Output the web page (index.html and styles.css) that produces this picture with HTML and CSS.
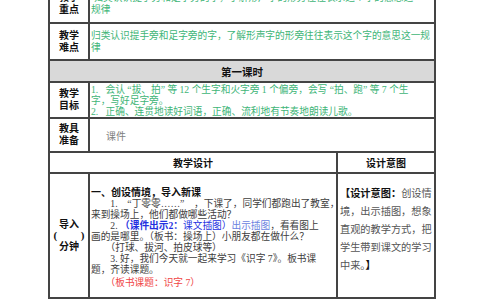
FILE: index.html
```html
<!DOCTYPE html>
<html lang="zh">
<head>
<meta charset="utf-8">
<title>识字7 教学设计</title>
<link rel="stylesheet" href="styles.css">
</head>
<body>
<div class="sheet">
  <div class="cell label"><span>教学</span><span>重点</span></div>
  <div class="cell text green wide">
    <div class="ln">&nbsp;归类认识提手旁和足字旁的字，了解形声字的形旁往往表示这个字的意思这</div>
    <div class="ln">规律</div>
  </div>

  <div class="cell label"><span>教学</span><span>难点</span></div>
  <div class="cell text green wide">
    <div class="ln">归类认识提手旁和足字旁的字，了解形声字的形旁往往表示这个字的意思这一规</div>
    <div class="ln">律</div>
  </div>

  <div class="cell section">第一课时</div>

  <div class="cell label"><span>教学</span><span>目标</span></div>
  <div class="cell text green wide tight">
    <div class="ln">1.&nbsp;&nbsp; 会认 “拔、拍” 等 12 个生字和火字旁 1 个偏旁，会写 “拍、跑” 等 7 个生</div>
    <div class="ln">字，写好足字旁。</div>
    <div class="ln">2.&nbsp;&nbsp; 正确、连贯地读好词语，正确、流利地有节奏地朗读儿歌。</div>
  </div>

  <div class="cell label"><span>教具</span><span>准备</span></div>
  <div class="cell wide tools">课件</div>

  <div class="cell head head-main">教学设计</div>
  <div class="cell head">设计意图</div>

  <div class="cell label step"><span>导入</span><span class="paren"><span>(</span><span>)</span></span><span>分钟</span></div>
  <div class="cell body">
    <div class="ln strong">一、创设情境，导入新课</div>
    <div class="ln">　　1.&nbsp;&nbsp;&nbsp; “丁零零……”&nbsp;&nbsp;&nbsp; ，下课了，同学们都跑出了教室，</div>
    <div class="ln">来到操场上，他们都做哪些活动？</div>
    <div class="ln">　　2. <b class="blue">（课件出示2：</b><span class="blue">课文插图）</span><span class="lightblue">出示插图</span>，看看图上</div>
    <div class="ln">画的是哪里。（板书：操场上）小朋友都在做什么？</div>
    <div class="ln">　　（打球、拔河、拍皮球等）</div>
    <div class="ln">　　3. 好，我们今天就一起来学习《识字 7》。板书课</div>
    <div class="ln">题，齐读课题。</div>
    <div class="ln red">　　（板书课题：识字 7）</div>
  </div>
  <div class="cell intent">
    <div class="ln"><b>【设计意图：</b>创设情</div>
    <div class="ln">境，出示插图，想象</div>
    <div class="ln">直观的教学方式，把</div>
    <div class="ln">学生带到课文的学习</div>
    <div class="ln">中来。<b>】</b></div>
  </div>
</div>
</body>
</html>
```

FILE: styles.css
```css
html, body {
  margin: 0;
  padding: 0;
  background: #ffffff;
}

body {
  font-family: "Liberation Serif", "Noto Sans CJK SC", serif;
  color: #3d3d3d;
  overflow: hidden;
}

.sheet {
  display: grid;
  grid-template-columns: 40px 248px 98px;
  grid-template-rows: 38px 37px 22px 36px 34px 21px 125px;
  width: max-content;
  margin: -16px 0 0 48px;
  border-left: 2px solid #444;
  border-top: 2px solid #444;
}

.cell {
  box-sizing: border-box;
  border-right: 2px solid #444;
  border-bottom: 2px solid #444;
  overflow: hidden;
  min-width: 0;
}

.ln {
  white-space: nowrap;
}

.label {
  display: flex;
  flex-direction: column;
  align-items: center;
  justify-content: center;
  font-size: 10px;
  line-height: 12px;
  font-weight: 700;
  color: #111;
}

.step {
  line-height: 11px;
}

.paren {
  display: flex;
  justify-content: space-between;
  width: 31px;
  font-size: 11px;
}

.wide {
  grid-column: 2 / 4;
}

.text {
  display: flex;
  flex-direction: column;
  justify-content: center;
  padding-left: 1px;
  font-size: 9.7px;
  line-height: 12px;
}

.tight {
  line-height: 11px;
}

.green {
  color: #3eb577;
}

.section {
  grid-column: 1 / 4;
  display: flex;
  align-items: center;
  justify-content: center;
  background: #d9d9d9;
  font-size: 10.5px;
  font-weight: 700;
  color: #111;
}

.tools {
  display: flex;
  align-items: center;
  padding-left: 16px;
  font-size: 10px;
  color: #808080;
}

.head {
  display: flex;
  align-items: center;
  justify-content: center;
  font-size: 10px;
  font-weight: 700;
  color: #111;
}

.head-main {
  grid-column: 1 / 3;
}

.body {
  padding: 13px 0 0 1px;
  font-size: 9.7px;
  line-height: 11px;
}

.strong {
  font-size: 10px;
  font-weight: 700;
  color: #111;
}

.blue {
  color: #2330e0;
}

.lightblue {
  color: #6a7fe0;
}

.red {
  margin-top: 2px;
  color: #f04545;
}

.intent {
  padding: 11px 0 0 2px;
  font-size: 10.2px;
  line-height: 18px;
  color: #555;
}

.intent b {
  color: #111;
}
```
